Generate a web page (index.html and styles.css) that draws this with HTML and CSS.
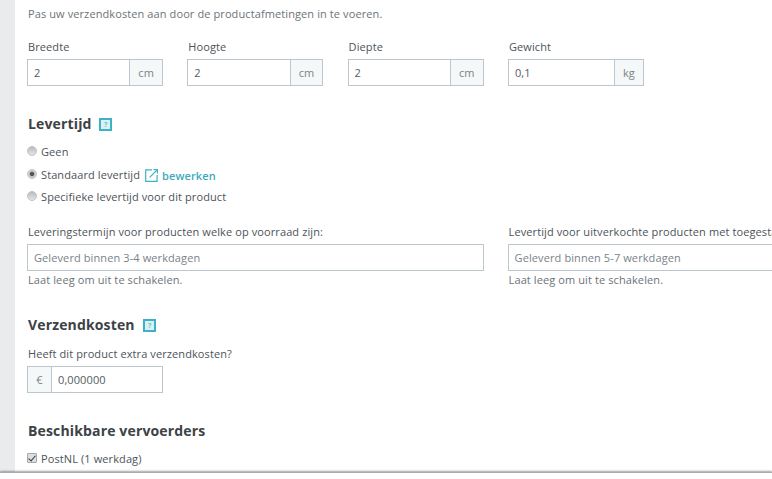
FILE: index.html
```html
<!DOCTYPE html>
<html lang="nl">
<head>
<meta charset="utf-8">
<title>Product</title>
<link rel="stylesheet" href="styles.css">
</head>
<body>
<div class="viewport">
  <div class="rail"></div>
  <main class="main">
    <p class="intro">Pas uw verzendkosten aan door de productafmetingen in te voeren.</p>
    <div class="dims">
      <div class="field"><label class="label">Breedte</label><div class="group"><input class="input" value="2"><span class="addon addon-right">cm</span></div></div>
      <div class="field"><label class="label">Hoogte</label><div class="group"><input class="input" value="2"><span class="addon addon-right">cm</span></div></div>
      <div class="field"><label class="label">Diepte</label><div class="group"><input class="input" value="2"><span class="addon addon-right">cm</span></div></div>
      <div class="field"><label class="label">Gewicht</label><div class="group"><input class="input" value="0,1"><span class="addon addon-right">kg</span></div></div>
    </div>

    <h2 class="heading heading-lever">Levertijd <span class="help"><span class="help-mark">?</span></span></h2>
    <div class="options">
      <label class="option"><input class="radio" type="radio" name="lt"><span>Geen</span></label>
      <label class="option"><input class="radio" type="radio" name="lt" checked><span>Standaard levertijd</span>
        <a class="edit" href="#">
          <svg class="edit-icon" width="13" height="13" viewBox="0 0 13 13" fill="none" stroke="#3cb2c4" stroke-width="1.2"><path d="M7 .9H.7v11.4h11.4V6"/><path d="M4.6 8.4 12.2.8"/><path d="M8.6.7h3.8v3.8"/></svg>
          bewerken</a></label>
      <label class="option"><input class="radio" type="radio" name="lt"><span>Specifieke levertijd voor dit product</span></label>
    </div>

    <div class="terms">
      <div class="term">
        <label class="label">Leveringstermijn voor producten welke op voorraad zijn:</label>
        <input class="input input-wide" placeholder="Geleverd binnen 3-4 werkdagen">
        <p class="hint">Laat leeg om uit te schakelen.</p>
      </div>
      <div class="term">
        <label class="label">Levertijd voor uitverkochte producten met toegestane backorders:</label>
        <input class="input input-wide" placeholder="Geleverd binnen 5-7 werkdagen">
        <p class="hint">Laat leeg om uit te schakelen.</p>
      </div>
    </div>

    <h2 class="heading heading-cost">Verzendkosten <span class="help"><span class="help-mark">?</span></span></h2>
    <label class="label">Heeft dit product extra verzendkosten?</label>
    <div class="group"><span class="addon addon-left">€</span><input class="input" value="0,000000"></div>

    <h2 class="heading heading-carriers">Beschikbare vervoerders</h2>
    <label class="option"><input class="check" type="checkbox" checked><span>PostNL (1 werkdag)</span></label>
  </main>
</div>
<div class="strip"></div>
</body>
</html>
```
FILE: styles.css
```css
* { box-sizing: border-box; }
html, body { margin: 0; padding: 0; }
body {
  width: 772px;
  height: 479px;
  overflow: hidden;
  background: #fff;
  font-family: "Open Sans", "Liberation Sans", sans-serif;
  font-size: 11px;
  line-height: 16px;
  color: #4d5359;
  letter-spacing: 0.1px;
}
.viewport { display: flex; height: 472px; overflow: hidden; }
.rail { flex: 0 0 15px; background: #e9ebec; }
.strip {
  height: 7px;
  background: #fff;
  border-top: 1px solid #a9abad;
  box-shadow: 0 -1px 2px rgba(90, 90, 90, .55);
  position: relative;
}
.main { flex: 1 1 auto; min-width: 0; padding: 6px 0 0 12px; overflow: hidden; }
.intro { margin: 0; color: #6c7378; padding-left: 1px; }
.dims { display: flex; gap: 24.3px; margin-top: 17px; }
.field { flex: 0 0 136px; }
.label { display: block; color: #4d5359; margin-bottom: 4px; padding-left: 1px; white-space: nowrap; }
.group { display: flex; width: 136px; height: 27px; }
.input {
  flex: 1 1 auto;
  min-width: 0;
  height: 27px;
  border: 1px solid #bcc7cd;
  background: #fff;
  padding: 0 6px;
  font: inherit;
  letter-spacing: inherit;
  color: #555b60;
  outline: none;
  border-radius: 0;
}
.input::placeholder { color: #7b8287; opacity: 1; }
.addon {
  display: flex;
  align-items: center;
  justify-content: center;
  height: 27px;
  background: #f5f8f9;
  border: 1px solid #bcc7cd;
  color: #7b8287;
  flex: 0 0 auto;
}
.addon-right { padding: 0 8px; border-left: 0; }
.addon-left { width: 24px; border-right: 0; }
.heading {
  margin: 0;
  font-size: 14px;
  line-height: 20px;
  font-weight: 700;
  color: #3c4246;
  padding-left: 1px;
  letter-spacing: 0.15px;
  display: flex;
  align-items: center;
  gap: 7.5px;
}
.heading-lever { margin-top: 28px; }
.heading-cost { margin-top: 27px; margin-bottom: 11px; gap: 8.5px; }
.heading-carriers { margin-top: 28px; margin-bottom: 10px; }
.help {
  width: 13px;
  height: 13px;
  border: 2px solid #3cb2c4;
  background: #d9f0f4;
  display: flex;
  align-items: center;
  justify-content: center;
}
.help-mark { font-size: 7px; line-height: 9px; font-weight: 700; color: #6cc2d0; letter-spacing: 0; }
.options { margin-top: 10px; display: flex; flex-direction: column; gap: 6.5px; }
.option { display: flex; align-items: center; gap: 4px; height: 16px; color: #4d5359; }
.radio, .check {
  appearance: none;
  margin: 0;
  flex: 0 0 auto;
  width: 10px;
  height: 10px;
  position: relative;
  top: -1px;
  background: linear-gradient(#b8bbbe, #e4e6e7);
  border: 1px solid #c0c3c6;
}
.radio { border-radius: 50%; }
.radio:checked { background: radial-gradient(circle, #54575a 0 1.8px, #cfd1d3 2.8px); }
.check { border-radius: 1px; background: #dcdedf; border-color: #a5a8ab; }
.check:checked::after {
  content: "";
  position: absolute;
  left: 2px;
  top: 0;
  width: 3px;
  height: 6px;
  border: solid #36393c;
  border-width: 0 1.6px 1.6px 0;
  transform: rotate(40deg);
}
.edit { display: inline-flex; align-items: center; gap: 4px; color: #3ea9bb; text-decoration: none; font-weight: 600; margin-left: 1px; position: relative; top: 1px; }
.edit-icon { display: block; }
.terms { display: flex; gap: 24px; margin-top: 19px; }
.term { flex: 0 0 456.6px; }
.input-wide { display: block; width: 100%; height: 27px; margin-bottom: 1px; }
.hint { margin: 0; color: #6c7378; padding-left: 1px; }
```
